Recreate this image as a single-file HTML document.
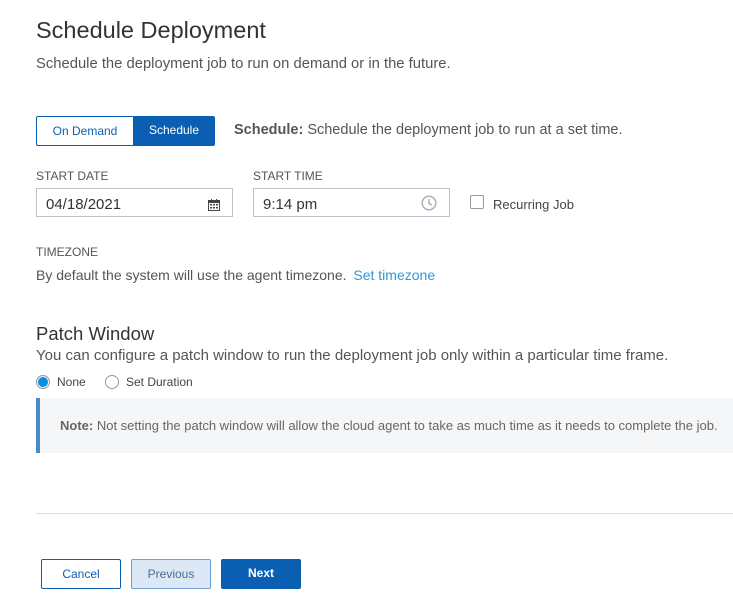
<!DOCTYPE html>
<html><head><style>
body{margin:0;width:733px;height:598px;background:#fff;font-family:"Liberation Sans",sans-serif;color:#444;position:relative;overflow:hidden}
.a{position:absolute;white-space:nowrap}
.lbl{font-size:12px;color:#555}
.inp{position:absolute;height:29px;border:1px solid #b9c2cb;box-sizing:border-box;font-size:15px;color:#333;padding:6px 9px}
.btn{position:absolute;height:30px;box-sizing:border-box;font-size:12px;text-align:center;line-height:29px;border-radius:2px}
</style></head><body>
<div class="a" style="left:36px;top:17px;font-size:23.5px;color:#333">Schedule Deployment</div>
<div class="a" style="left:36px;top:56px;font-size:14.8px;color:#555">Schedule the deployment job to run on demand or in the future.</div>

<div class="btn" style="left:36px;top:116px;width:97px;border:1px solid #0b5fb3;border-right:none;color:#0b5fb3;border-radius:2px 0 0 2px">On Demand</div>
<div class="btn" style="left:133px;top:116px;width:82px;background:#0b5fb3;color:#fff;border-radius:0 2px 2px 0">Schedule</div>
<div class="a" style="left:234px;top:122px;font-size:14.5px;color:#555"><b>Schedule:</b> Schedule the deployment job to run at a set time.</div>

<div class="a lbl" style="left:36px;top:169px">START DATE</div>
<div class="a lbl" style="left:253px;top:169px">START TIME</div>
<div class="inp" style="left:36px;top:188px;width:197px;padding-top:7px">04/18/2021
<svg style="position:absolute;right:12px;top:10px" width="12" height="12" viewBox="0 0 12 12"><rect x="0.5" y="1.5" width="11" height="10" fill="none" stroke="#444"/><rect x="0" y="1" width="12" height="3" fill="#444"/><g fill="#444"><rect x="2" y="5" width="2" height="1.5"/><rect x="5" y="5" width="2" height="1.5"/><rect x="8" y="5" width="2" height="1.5"/><rect x="2" y="8" width="2" height="1.5"/><rect x="5" y="8" width="2" height="1.5"/><rect x="8" y="8" width="2" height="1.5"/></g><rect x="3" y="0" width="1" height="2" fill="#444"/><rect x="8" y="0" width="1" height="2" fill="#444"/></svg></div>
<div class="inp" style="left:253px;top:188px;width:197px;padding-top:7px">9:14 pm
<svg style="position:absolute;right:12px;top:6px" width="16" height="16" viewBox="0 0 16 16"><circle cx="8" cy="8" r="6.8" fill="none" stroke="#aab2ba" stroke-width="1.5"/><path d="M8 4v4.5l3 1.5" fill="none" stroke="#aab2ba" stroke-width="1.5"/></svg></div>
<div class="a" style="left:470px;top:195px;width:14px;height:14px;border:1px solid #999;box-sizing:border-box;border-radius:2px"></div>
<div class="a" style="left:493px;top:197px;font-size:13px;color:#444">Recurring Job</div>

<div class="a lbl" style="left:36px;top:245px">TIMEZONE</div>
<div class="a" style="left:36px;top:267px;font-size:14px;color:#555">By default the system will use the agent timezone. <span style="color:#2a9ad8;margin-left:3px">Set timezone</span></div>

<div class="a" style="left:36px;top:323px;font-size:18.5px;color:#333">Patch Window</div>
<div class="a" style="left:36px;top:347px;font-size:15px;color:#555">You can configure a patch window to run the deployment job only within a particular time frame.</div>
<div class="a" style="left:36px;top:375px;width:14px;height:14px;border-radius:50%;border:1px solid #999;box-sizing:border-box;background:radial-gradient(#0a8fe0 0 4.5px,#fff 5.5px)"></div>
<div class="a" style="left:57px;top:375px;font-size:12px;color:#444">None</div>
<div class="a" style="left:105px;top:375px;width:14px;height:14px;border-radius:50%;border:1px solid #999;box-sizing:border-box"></div>
<div class="a" style="left:126px;top:375px;font-size:12px;color:#444">Set Duration</div>

<div class="a" style="left:36px;top:398px;width:697px;height:55px;background:#f5f6f8;border-left:4px solid #4a8ac8;box-sizing:border-box"></div>
<div class="a" style="left:60px;top:418px;font-size:13px;color:#666"><b>Note:</b> Not setting the patch window will allow the cloud agent to take as much time as it needs to complete the job.</div>

<div class="a" style="left:36px;top:513px;width:697px;height:1px;background:#ddd"></div>

<div class="btn" style="left:41px;top:559px;width:80px;border:1px solid #0b5fb3;color:#0b5fb3">Cancel</div>
<div class="btn" style="left:131px;top:559px;width:80px;border:1px solid #6ea0d6;background:#dce8f5;color:#4a6e96">Previous</div>
<div class="btn" style="left:221px;top:559px;width:80px;background:#0b5fb3;color:#fff;font-weight:bold">Next</div>
</body></html>
